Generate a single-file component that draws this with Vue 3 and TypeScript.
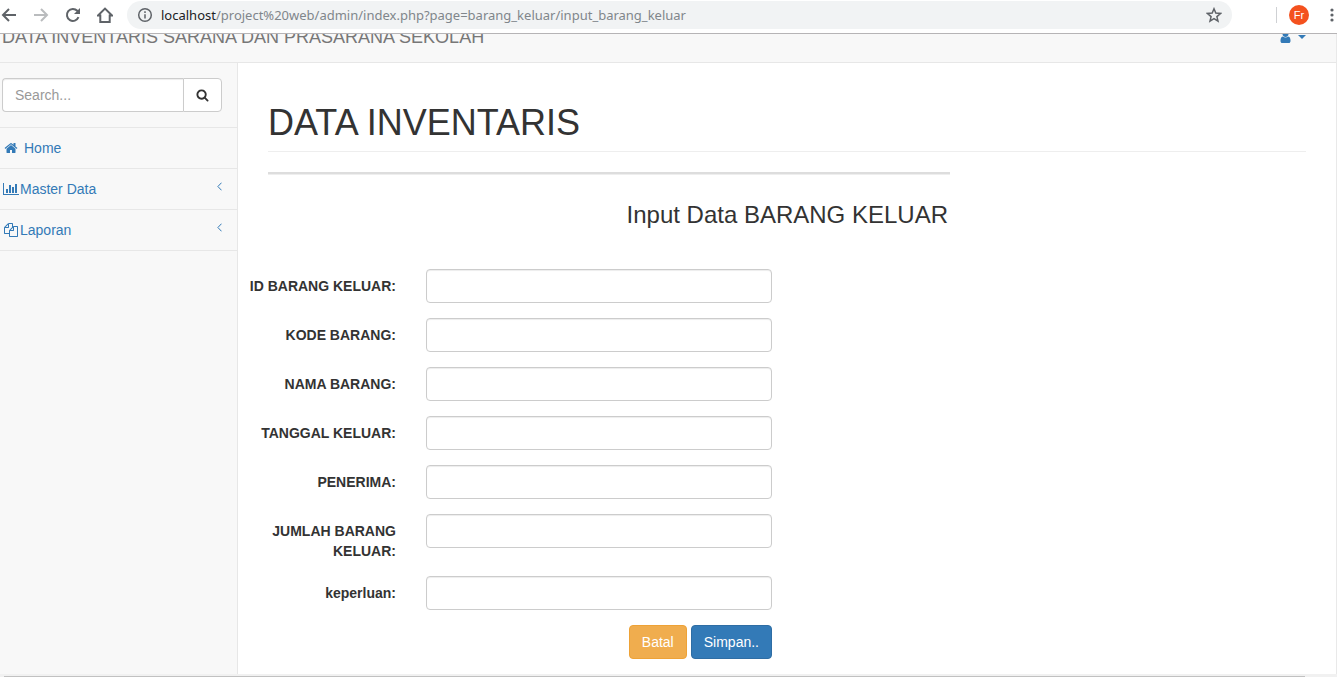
<script setup lang="ts">
import { reactive, ref } from 'vue'

interface Field {
  id: string
  label: string
}

interface MenuItem {
  label: string
  box: string
  path: string
  width: number
  expandable: boolean
}

const fields: Field[] = [
  { id: 'id_barang_keluar', label: 'ID BARANG KELUAR:' },
  { id: 'kode_barang', label: 'KODE BARANG:' },
  { id: 'nama_barang', label: 'NAMA BARANG:' },
  { id: 'tanggal_keluar', label: 'TANGGAL KELUAR:' },
  { id: 'penerima', label: 'PENERIMA:' },
  { id: 'jumlah_barang_keluar', label: 'JUMLAH BARANG KELUAR:' },
  { id: 'keperluan', label: 'keperluan:' },
]

const menu: MenuItem[] = [
  {
    label: 'Home',
    box: '0 0 1792 1792',
    width: 14,
    expandable: false,
    path: 'M1472 992v480q0 26-19 45t-45 19h-384v-384h-256v384h-384q-26 0-45-19t-19-45v-480q0-1 .5-3t.5-3l575-474 575 474q1 2 1 6zm223-69l-62 74q-8 9-21 11h-3q-13 0-21-7l-692-577-692 577q-12 8-24 7-13-2-21-11l-62-74q-8-10-7-23.5t11-21.5l719-599q32-26 76-26t76 26l244 204v-195q0-14 9-23t23-9h192q14 0 23 9t9 23v408l219 182q10 8 11 21.5t-7 23.5z',
  },
  {
    label: 'Master Data',
    box: '0 0 2048 1792',
    width: 16,
    expandable: true,
    path: 'M640 896v512h-256v-512h256zm384-512v1024h-256v-1024h256zm1024 1152v128h-2048v-1536h128v1408h1920zm-640-896v768h-256v-768h256zm384-384v1152h-256v-1152h256z',
  },
  {
    label: 'Laporan',
    box: '0 0 1792 1792',
    width: 14,
    expandable: true,
    path: 'M1696 384q40 0 68 28t28 68v1216q0 40-28 68t-68 28h-960q-40 0-68-28t-28-68v-288h-544q-40 0-68-28t-28-68v-672q0-40 20-88t48-76l408-408q28-28 76-48t88-20h416q40 0 68 28t28 68v328q68-40 128-40h416zm-544 213l-299 299h299v-299zm-640-384l-299 299h299v-299zm196 647l316-316v-416h-384v416q0 40-28 68t-68 28h-416v640h512v-256q0-40 20-88t48-76zm956 804v-1152h-384v416q0 40-28 68t-68 28h-416v640h896z',
  },
]

const values = reactive<Record<string, string>>({})
const query = ref('')
</script>

<template>
  <div class="window">
    <header class="toolbar">
      <button class="tool" type="button" aria-label="Back">
        <svg viewBox="0 0 16 16" width="16" height="16"><path d="M15 8H2M8 2L2 8l6 6" /></svg>
      </button>
      <button class="tool dim" type="button" aria-label="Forward" disabled>
        <svg viewBox="0 0 16 16" width="16" height="16"><path d="M1 8h13M8 2l6 6-6 6" /></svg>
      </button>
      <button class="tool" type="button" aria-label="Reload">
        <svg viewBox="0 0 16 16" width="16" height="16">
          <path d="M13.500 10.200A6 6 0 1 1 12.300 3.800L14 5.500" />
          <path class="solid" d="M15 1v6H9z" />
        </svg>
      </button>
      <button class="tool" type="button" aria-label="Home page">
        <svg viewBox="0 0 16 16" width="16" height="16"><path d="M1 8.500L8 1.600l7 6.900h-2.300V15H3.300V8.500z" /></svg>
      </button>
      <div class="address">
        <svg class="info" viewBox="0 0 16 16" width="16" height="16">
          <circle cx="8" cy="8" r="6.300" />
          <path d="M8 7.200v4.300M8 4.300v1.600" />
        </svg>
        <span class="url"><span class="host">localhost</span>/project%20web/admin/index.php?page=barang_keluar/input_barang_keluar</span>
        <button class="tool star" type="button" aria-label="Bookmark">
          <svg viewBox="0 0 16 16" width="16" height="16">
            <path d="M8 1.800l1.800 4.300 4.700.4-3.600 3.100 1.100 4.600L8 11.700l-4 2.500 1.100-4.600-3.600-3.100 4.700-.4z" />
          </svg>
        </button>
      </div>
      <span class="divider"></span>
      <button class="avatar" type="button">Fr</button>
      <button class="more" type="button" aria-label="Menu">
        <svg viewBox="0 0 4 14" width="4" height="14">
          <circle cx="2" cy="2" r="1.600" /><circle cx="2" cy="7" r="1.600" /><circle cx="2" cy="12" r="1.600" />
        </svg>
      </button>
    </header>

    <div class="page">
      <nav class="navbar">
        <a class="brand" href="#">DATA INVENTARIS SARANA DAN PRASARANA SEKOLAH</a>
        <a class="account" href="#" aria-label="Account">
          <svg viewBox="0 0 1792 1792" width="15" height="14">
            <path d="M1536 1399q0 109-62.500 187t-150.500 78h-854q-88 0-150.500-78t-62.500-187q0-85 8.500-160.500t31.500-152 58.500-131 94-89 134.500-34.500q131 128 313 128t313-128q76 0 134.500 34.500t94 89 58.500 131 31.500 152 8.500 160.500zm-256-887q0 159-112.500 271.500t-271.500 112.500-271.500-112.500-112.500-271.500 112.500-271.500 271.500-112.500 271.500 112.500 112.500 271.500z" />
          </svg>
          <svg class="caret" viewBox="0 0 8 14" width="8" height="14"><path d="M0 5h8l-4 4z" /></svg>
        </a>
      </nav>

      <div class="body">
        <aside class="sidebar">
          <form class="search" @submit.prevent>
            <input v-model="query" type="text" placeholder="Search..." aria-label="Search" />
            <button type="submit" aria-label="Search">
              <svg viewBox="0 0 1792 1792" width="13" height="14">
                <path d="M1216 832q0-185-131.500-316.500t-316.500-131.500-316.500 131.500-131.500 316.500 131.500 316.500 316.500 131.500 316.500-131.500 131.500-316.500zm512 832q0 52-38 90t-90 38q-54 0-90-38l-343-342q-179 124-399 124-143 0-273.500-55.500t-225-150-150-225-55.500-273.500 55.500-273.500 150-225 225-150 273.500-55.500 273.500 55.500 225 150 150 225 55.500 273.500q0 220-124 399l343 343q37 37 37 90z" />
              </svg>
            </button>
          </form>
          <ul class="menu">
            <li v-for="item in menu" :key="item.label">
              <a href="#" :class="{ spaced: !item.expandable }">
                <span class="glyph">
                  <svg :viewBox="item.box" :width="item.width" height="14"><path :d="item.path" /></svg>
                </span>
                <span class="name">{{ item.label }}</span>
                <svg v-if="item.expandable" class="arrow" viewBox="0 0 5 9" width="5" height="9">
                  <path d="M4.500 .7L.9 4.500l3.600 3.800" />
                </svg>
              </a>
            </li>
          </ul>
        </aside>

        <main class="content">
          <h1>DATA INVENTARIS</h1>
          <section class="panel">
            <div class="rule"></div>
            <h3>Input Data BARANG KELUAR</h3>
            <form class="entry" @submit.prevent>
              <div v-for="field in fields" :key="field.id" class="group">
                <label :for="field.id">{{ field.label }}</label>
                <input :id="field.id" v-model="values[field.id]" type="text" />
              </div>
              <div class="group">
                <div class="actions">
                  <button class="btn cancel" type="reset">Batal</button>
                  <button class="btn save" type="submit">Simpan..</button>
                </div>
              </div>
            </form>
          </section>
        </main>
      </div>
    </div>
    <div class="scroll"><div class="thumb"></div></div>
  </div>
</template>

<style>
body {
  margin: 0;
}
</style>

<style scoped>
* {
  box-sizing: border-box;
}
.window {
  display: flex;
  flex-direction: column;
  min-height: 100vh;
  background: #fff;
  color: #333;
  font: 14px/20px "Liberation Sans", Arial, sans-serif;
}
button {
  font: inherit;
  cursor: pointer;
}
svg {
  display: block;
  flex: none;
}
a {
  color: #337ab7;
  text-decoration: none;
}

/* Browser toolbar */
.toolbar {
  display: flex;
  align-items: center;
  height: 34px;
  padding: 0 3px 4px 1px;
  border-bottom: 1px solid #b6b4b6;
}
.tool {
  display: flex;
  margin-right: 16px;
  padding: 0;
  border: 0;
  background: none;
}
.tool svg,
.info {
  fill: none;
  stroke: #5f6368;
  stroke-width: 2;
}
.tool .solid {
  fill: #5f6368;
  stroke: none;
}
.dim svg {
  stroke: #babcbe;
}
.address {
  display: flex;
  flex: 1;
  align-items: center;
  gap: 8px;
  height: 28px;
  margin-right: 44px;
  margin-left: -2px;
  padding: 0 10px;
  border-radius: 14px;
  background: #f1f3f4;
}
.info {
  stroke-width: 1.500;
}
.url {
  flex: 1;
  color: #80868b;
  font: 13px/20px "Noto Sans", "Open Sans", sans-serif;
}
.host {
  color: #202124;
}
.star {
  margin: 0;
}
.star svg {
  stroke-width: 1.500;
}
.divider {
  width: 1px;
  height: 16px;
  background: #cfd1d4;
}
.avatar {
  width: 20px;
  height: 20px;
  margin: 0 21px 0 12px;
  padding: 0;
  border: 0;
  border-radius: 50%;
  background: #f4511e;
  color: #fff;
  font-size: 11px;
  line-height: 20px;
}
.more {
  padding: 0;
  border: 0;
  background: none;
  fill: #5f6368;
}

/* Page */
.page {
  display: flex;
  flex: 1;
  flex-direction: column;
  border-right: 1px solid #e9e9e9;
}
.navbar {
  display: flex;
  align-items: flex-end;
  justify-content: space-between;
  height: 29px;
  padding: 0 30px 15px 2px;
  border-bottom: 1px solid #e7e7e7;
  background: #f8f8f8;
  overflow: hidden;
}
.brand {
  color: #777;
  font-size: 18px;
  line-height: 20px;
}
.account {
  display: flex;
  align-items: center;
  gap: 5px;
  height: 20px;
  fill: #337ab7;
}
.body {
  display: flex;
  flex: 1;
}
.sidebar {
  flex: none;
  width: 238px;
  border-right: 1px solid #e7e7e7;
  background: #f8f8f8;
}
.search {
  display: flex;
  padding: 15px 15px 15px 2px;
}
input {
  min-width: 0;
  height: 34px;
  padding: 6px 12px;
  border: 1px solid #ccc;
  border-radius: 4px;
  background: #fff;
  color: #555;
  font: inherit;
  box-shadow: inset 0 1px 1px rgba(0, 0, 0, 0.075);
}
input::placeholder {
  color: #999;
  opacity: 1;
}
.search input {
  flex: 1;
  border-right: 0;
  border-radius: 4px 0 0 4px;
}
.search button {
  padding: 0 12px;
  border: 1px solid #ccc;
  border-radius: 0 4px 4px 0;
  background: #fff;
  fill: #333;
}
.menu {
  margin: 0;
  padding: 0;
  border-top: 1px solid #e7e7e7;
  list-style: none;
}
.menu li {
  border-bottom: 1px solid #e7e7e7;
}
.menu a {
  display: flex;
  align-items: center;
  padding: 10px 15px 10px 2px;
}
.glyph {
  display: flex;
  justify-content: center;
  width: 18px;
  fill: #337ab7;
}
.name {
  flex: 1;
}
.spaced .name {
  padding-left: 4px;
}
.arrow {
  margin-bottom: 6px;
  fill: none;
  stroke: #337ab7;
}

.content {
  flex: 1;
  min-width: 0;
  padding: 40px 30px 15px;
}
h1 {
  margin: 0 0 20px;
  padding-bottom: 8px;
  border-bottom: 1px solid #eee;
  font-size: 36px;
  font-weight: 400;
  line-height: 40px;
}
.panel {
  width: calc((100% + 30px) * 2 / 3 - 30px);
}
.rule {
  height: 3px;
  border-bottom: 1px solid #eee;
  background: #ddd;
}
h3 {
  margin: 27px 2px 41px 0;
  font-size: 24px;
  font-weight: 400;
  line-height: 26px;
  text-align: right;
}
.entry {
  display: grid;
  gap: 15px;
  margin-left: -30px;
}
.group {
  display: grid;
  grid-template-columns: minmax(0, 158fr) minmax(0, 346fr) minmax(0, 148fr);
  column-gap: 30px;
}
label {
  padding-top: 7px;
  font-weight: 700;
  text-align: right;
}
.actions {
  display: flex;
  grid-column: 2;
  justify-content: flex-end;
  gap: 4px;
}
.btn {
  height: 34px;
  padding: 6px 12px;
  border: 1px solid;
  border-radius: 4px;
  color: #fff;
}
.cancel {
  border-color: #eea236;
  background: #f0ad4e;
}
.save {
  border-color: #2e6da4;
  background: #337ab7;
}
.scroll {
  height: 3px;
  padding: 2px 32px 0 4px;
  background: #f1f1f1;
}
.thumb {
  height: 1px;
  background: #c1c1c1;
}
</style>
